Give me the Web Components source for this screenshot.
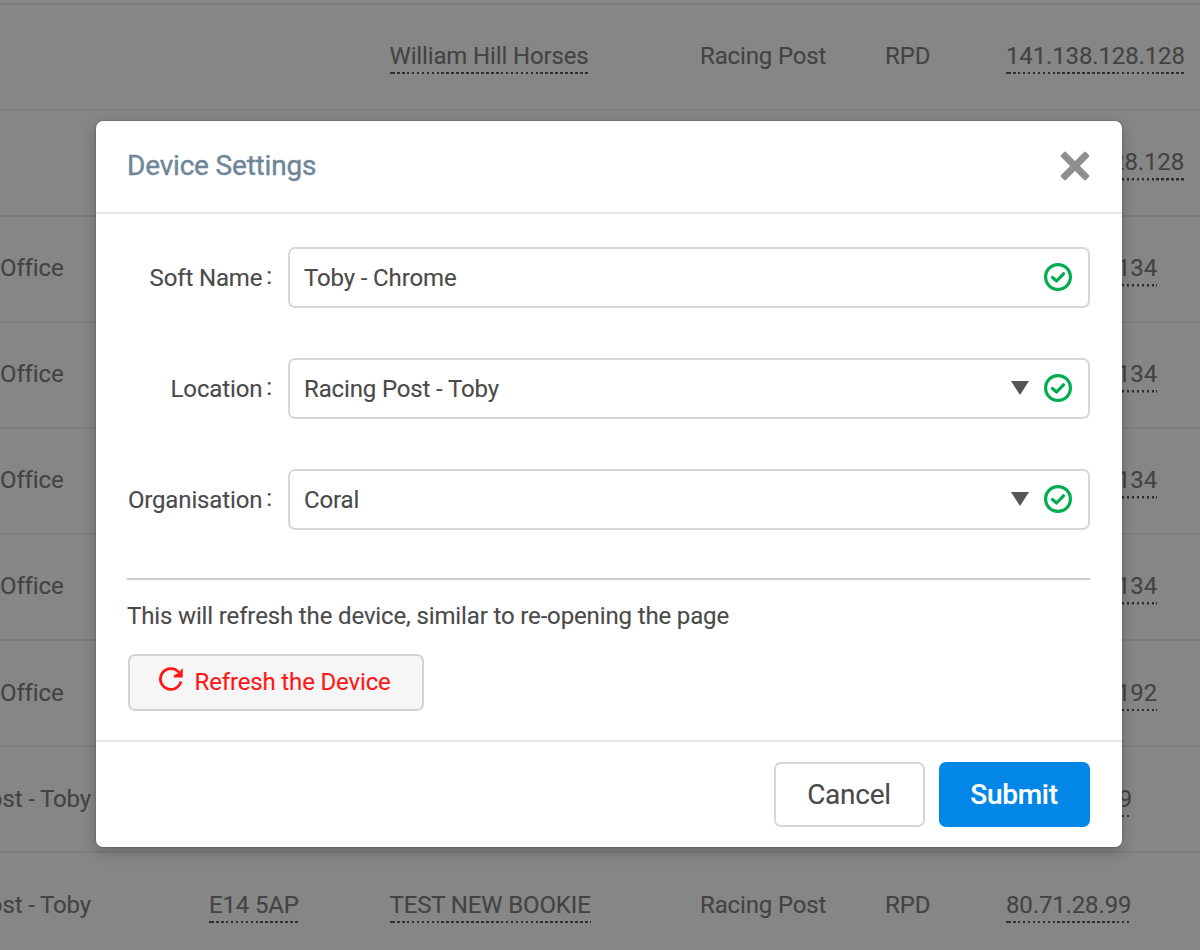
<!DOCTYPE html>
<html lang="en">
<head>
<meta charset="utf-8">
<title>Device Settings</title>
<style>
html,body{margin:0;width:1200px;height:950px;overflow:hidden;background:#868686}
body{position:relative;font-family:Roboto,"Liberation Sans",sans-serif;font-size:24px;letter-spacing:-.14px;color:#434343;-webkit-text-stroke:.12px}
</style>
</head>
<body>
<device-table></device-table>
<modal-layer>
  <settings-dialog>
    <span slot="title">Device Settings</span>
    <form-field label="Soft Name">Toby - Chrome</form-field>
    <form-field label="Location" select>Racing Post - Toby</form-field>
    <form-field label="Organisation" select>Coral</form-field>
    <refresh-section slot="extra"></refresh-section>
    <ui-button slot="actions">Cancel</ui-button>
    <ui-button slot="actions" primary>Submit</ui-button>
  </settings-dialog>
</modal-layer>
<script>
class BaseElement extends HTMLElement {
  connectedCallback() {
    if (!this.shadowRoot) this.attachShadow({ mode: 'open' }).innerHTML = this.render();
  }
}

customElements.define('device-link', class extends BaseElement {
  render() {
    return `<style>
      :host{display:block;width:max-content;min-width:var(--w,0);text-align:right;line-height:28px;padding-bottom:4.5px;
        background:linear-gradient(#2b2d31,#2b2d31) 0 100%/4px 2.5px no-repeat,
        repeating-linear-gradient(90deg,#2b2d31 0 2.6px,transparent 2.6px 4.95px) 2px 100%/100% 2.5px no-repeat}
    </style><slot></slot>`;
  }
});

customElements.define('device-row', class extends BaseElement {
  render() {
    return `<style>
      :host{display:grid;grid-template-columns:209px 180.5px 310.5px 185px 121px 194px;box-sizing:border-box;
        height:106.12px;border-top:2px solid #7c7c7c;padding-top:37.3px;align-items:start;line-height:28px;white-space:nowrap}
      .place{width:var(--end,91px);display:flex;justify-content:flex-end}
    </style>
    <div class="place"><slot name="place"></slot></div><div><slot name="code"></slot></div>
    <div><slot name="shop"></slot></div><div><slot name="group"></slot></div>
    <div><slot name="type"></slot></div><div><slot name="ip"></slot></div>`;
  }
});

customElements.define('device-table', class extends BaseElement {
  render() {
    const rows = [
      { shop: 'William Hill Horses', group: 'Racing Post', type: 'RPD', ip: '141.138.128.128' },
      { ip: '28.128', width: 178 },
      { place: 'Office', ip: '134', width: 151 }, { place: 'Office', ip: '134', width: 151 },
      { place: 'Office', ip: '134', width: 151 }, { place: 'Office', ip: '134', width: 151 },
      { place: 'Office', ip: '192', width: 151 },
      { place: 'ost - Toby', ip: '9', width: 126 },
      { place: 'ost - Toby', code: 'E14 5AP', shop: 'TEST NEW BOOKIE', group: 'Racing Post', type: 'RPD', ip: '80.71.28.99' }
    ];
    const link = (slot, text, width = 0) => text ? `<device-link slot="${slot}" style="--w:${width}px">${text}</device-link>` : '';
    const span = (slot, text) => text ? `<span slot="${slot}">${text}</span>` : '';
    return `<style>
      :host{display:block;height:950px;overflow:hidden;padding-top:2.6px;box-sizing:border-box}
      .office{--end:63.5px}
    </style>` + rows.map(r => `<device-row class="${r.place === 'Office' ? 'office' : ''}">${span('place', r.place)}${link('code', r.code)}${link('shop', r.shop)}${span('group', r.group)}${span('type', r.type)}${link('ip', r.ip, r.width)}</device-row>`).join('');
  }
});

customElements.define('modal-layer', class extends BaseElement {
  render() {
    return `<style>
      :host{position:absolute;inset:0;display:flex;align-items:flex-start;padding:121px 0 0 95.5px;color:#4a4a4a}
    </style><slot></slot>`;
  }
});

customElements.define('settings-dialog', class extends BaseElement {
  render() {
    return `<style>
      :host{display:flex;flex-direction:column;width:1026.5px;height:725.5px;box-sizing:border-box;background:#fff;border-radius:7px;
        box-shadow:0 5px 14px rgba(0,0,0,.22),0 0 2px rgba(0,0,0,.3)}
      header{height:93px;box-sizing:border-box;border-bottom:2px solid #e7e7e7;display:flex;align-items:center;justify-content:space-between;padding:0 32.5px 2px 31.5px}
      h1{margin:0;font-size:28px;line-height:32px;font-weight:400;letter-spacing:-.19px;color:#6f8698;-webkit-text-stroke:.4px #6f8698}
      header svg{display:block;margin-top:1px}
      main{flex:1;padding:33px 32.5px 0 31.5px}
      .fields{display:flex;flex-direction:column;gap:50px}
      footer{height:106.5px;box-sizing:border-box;border-top:2px solid #e7e7e7;display:flex;justify-content:flex-end;gap:14px;padding:20px 32px 0}
    </style>
    <header><h1><slot name="title"></slot></h1>
      <svg width="30" height="30" viewBox="0 0 30 30"><path d="M5 2 28 25 25 28 2 5ZM25 2 28 5 5 28 2 25Z" fill="#8f8f8f" stroke="#8f8f8f" stroke-width="2.6" stroke-linejoin="round"/></svg>
    </header>
    <main><div class="fields"><slot></slot></div><slot name="extra"></slot></main>
    <footer><slot name="actions"></slot></footer>`;
  }
});

customElements.define('form-field', class extends BaseElement {
  render() {
    const arrow = this.hasAttribute('select')
      ? '<svg class="arrow" width="18" height="14" viewBox="0 0 18 14"><path d="M0 0H18L9 14Z" fill="#555"/></svg>' : '';
    return `<style>
      :host{display:flex;align-items:center;height:61px}
      label{width:145px;text-align:right;margin-right:16px;box-sizing:border-box;line-height:28px}
      i{font-style:normal;position:relative;top:-2px;margin-left:4px}
      .box{flex:1;height:61px;box-sizing:border-box;border:2px solid #d7d7d7;border-radius:7px;display:flex;align-items:center;gap:15px;padding:0 16px 0 14px;line-height:28px}
      .text{flex:1}
      svg{display:block;margin-top:-1px}
      .arrow{margin-top:-2px}
    </style>
    <label>${this.getAttribute('label')}<i>:</i></label>
    <div class="box"><span class="text"><slot></slot></span>${arrow}
      <svg width="28" height="28" viewBox="0 0 28 28" fill="none" stroke="#00ac50"><circle cx="14" cy="14" r="12.4" stroke-width="3.2"/><path d="M8.5 14.5 12.6 18 19.5 10.800" stroke-width="3.2" stroke-linecap="round" stroke-linejoin="round"/></svg>
    </div>`;
  }
});

customElements.define('refresh-section', class extends BaseElement {
  render() {
    return `<style>
      :host{display:block;margin-top:47.500px;border-top:2px solid #ccc;padding-top:22.500px}
      p{margin:0;line-height:28px}
      button{margin:24px 0 0 .5px;width:296px;height:57px;box-sizing:border-box;border:2px solid #d2d2d2;border-radius:7px;background:#f6f6f6;
        font:inherit;letter-spacing:-.15px;color:#ff1717;-webkit-text-stroke:.12px;display:flex;align-items:center;padding:0 0 1px 28px;line-height:28px}
      svg{margin:-6px 11px 0 0}
    </style>
    <p>This will refresh the device, similar to re-opening the page</p>
    <button><svg width="26" height="26" viewBox="0 0 26 26"><path d="M22.900 15.500A10.400 10.400 0 1 1 20.800 6.300" fill="none" stroke="#ff1717" stroke-width="2.800"/><path d="M24.800 2V11.400H15.900V9.300L20 7.300Z" fill="#ff1717"/></svg>Refresh the Device</button>`;
  }
});

customElements.define('ui-button', class extends BaseElement {
  render() {
    return `<style>
      :host{display:block}
      button{width:151px;height:64.500px;box-sizing:border-box;border:2px solid #d7d7d7;border-radius:7px;background:#fff;color:#4a4a4a;
        font:inherit;font-size:28px;letter-spacing:-.25px;padding:1px 1px 0 0;line-height:32px}
      :host([primary]) button{border-color:#0286e7;background:#0286e7;color:#fff;font-weight:500}
    </style><button><slot></slot></button>`;
  }
});
</script>
</body>
</html>
